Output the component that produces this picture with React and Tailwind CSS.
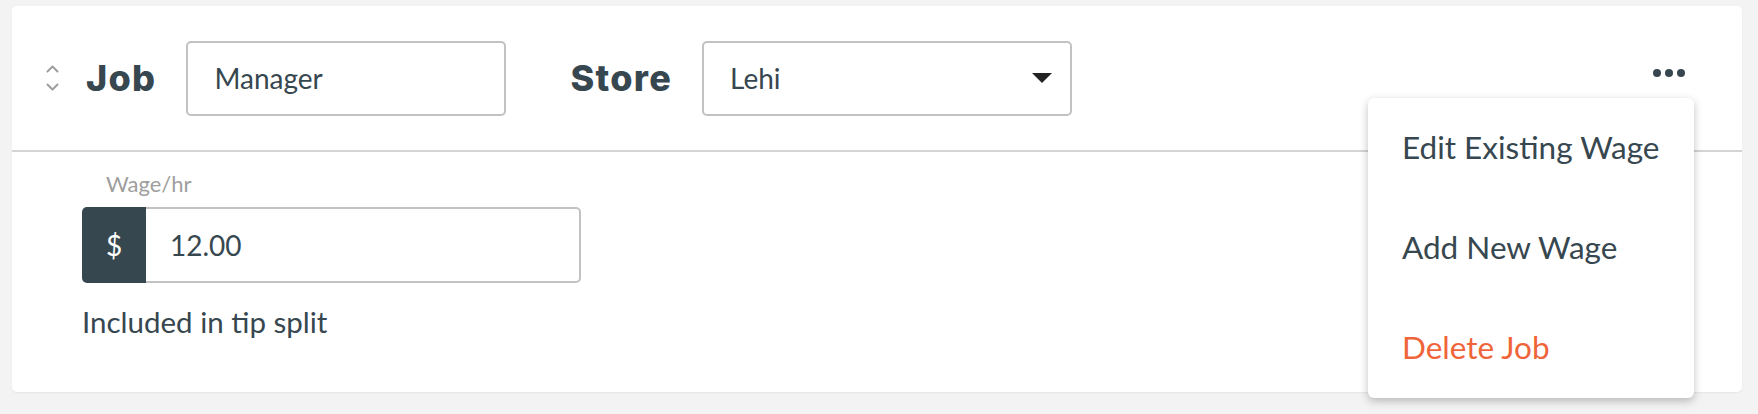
import { useState } from 'react';

const lato = { fontFamily: 'Lato, "Open Sans", sans-serif' };
const heading = { fontFamily: 'Inter, "Open Sans", sans-serif', letterSpacing: '1.3px' };

function SortIcon() {
  return (
    <svg width="13" height="26" viewBox="0 0 13 26" fill="none" stroke="#9e9e9e" strokeWidth="2" strokeLinecap="round" strokeLinejoin="round">
      <polyline points="1.5,6.5 6.5,1.5 11.5,6.5" />
      <polyline points="1.5,19.5 6.5,24.5 11.5,19.5" />
    </svg>
  );
}

function Caret() {
  return (
    <svg width="20" height="10" viewBox="0 0 20 10">
      <polygon points="0,0 20,0 10,10" fill="#222" />
    </svg>
  );
}

function App() {
  const [job] = useState('Manager');
  const [wage] = useState('12.00');

  return (
    <div className="min-h-[414px] bg-[#f3f3f3] pl-[12px] pr-[16px] pt-[6px]" style={lato}>
      <div className="relative h-[386px] rounded-[5px] bg-white shadow-[0_1px_2px_rgba(0,0,0,0.06)]">
        {/* header */}
        <div className="flex h-[146px] items-center border-b-2 border-[#d4d4d4] pl-[34px] pr-[57px]">
          <SortIcon />
          <span className="ml-[27px] text-[36px] font-extrabold text-[#37474f]" style={heading}>Job</span>
          <div className="ml-[30px] flex h-[75px] w-[320px] items-center rounded-[5px] border-2 border-[#c2c2c2] pl-[26px] text-[28px] text-[#37474f]">
            {job}
          </div>
          <span className="ml-[64px] text-[36px] font-extrabold text-[#37474f]" style={heading}>Store</span>
          <div className="ml-[30px] flex h-[75px] w-[370px] items-center justify-between rounded-[5px] border-2 border-[#c2c2c2] pl-[26px] pr-[18px] text-[28px] text-[#37474f]">
            <span>Lehi</span>
            <Caret />
          </div>
          <div className="ml-auto mb-[11px] flex gap-[4px]">
            <span className="h-[8px] w-[8px] rounded-full bg-[#37474f]" />
            <span className="h-[8px] w-[8px] rounded-full bg-[#37474f]" />
            <span className="h-[8px] w-[8px] rounded-full bg-[#37474f]" />
          </div>
        </div>

        {/* body */}
        <div className="pl-[70px] pt-[19px]">
          <div className="pl-[24px] text-[22px] leading-[26px] text-[#9e9e9e]">Wage/hr</div>
          <div className="mt-[10px] flex h-[76px] w-[499px]">
            <div className="flex w-[64px] items-center justify-center rounded-l-[5px] bg-[#37474f] text-[28px] text-white">$</div>
            <div className="flex flex-1 items-center rounded-r-[5px] border-2 border-l-0 border-[#c2c2c2] pl-[24px] text-[28px] text-[#37474f]">
              {wage}
            </div>
          </div>
          <div className="mt-[22px] text-[29.5px] leading-[34px] text-[#37474f]">Included in tip split</div>
        </div>

        {/* menu */}
        <div className="absolute right-[48px] top-[92px] flex w-[326px] flex-col rounded-[6px] bg-white shadow-[0_3px_8px_rgba(0,0,0,0.25)]">
          <div className="flex h-[100px] items-center pl-[34px] text-[31.5px] text-[#37474f]">Edit Existing Wage</div>
          <div className="flex h-[100px] items-center pl-[34px] text-[31.5px] text-[#37474f]">Add New Wage</div>
          <div className="flex h-[100px] items-center pl-[34px] text-[31.5px] text-[#f0643a]">Delete Job</div>
        </div>
      </div>
    </div>
  );
}

export default App;
